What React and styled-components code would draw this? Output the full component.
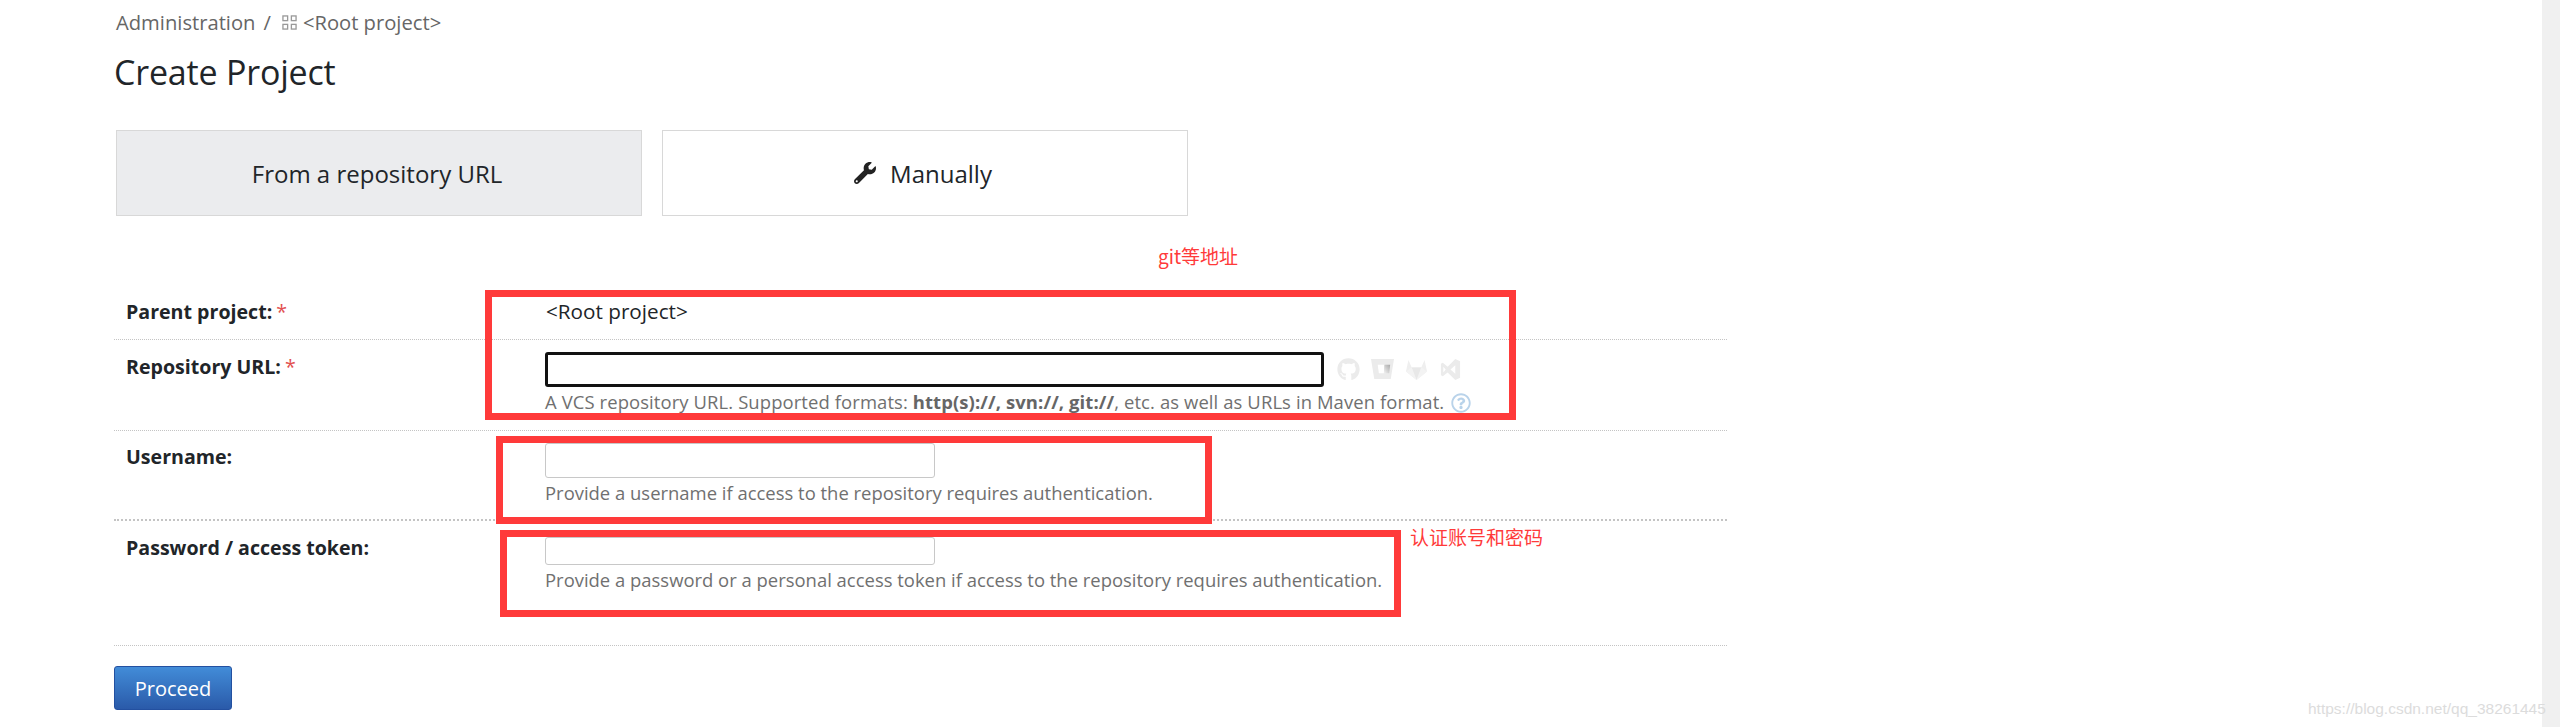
import React from 'react';
import styled, { createGlobalStyle } from 'styled-components';
import { FaGithub, FaWrench, FaRegQuestionCircle } from 'react-icons/fa';

const GlobalStyle = createGlobalStyle`
  html, body {
    margin: 0;
    background: #fff;
  }
  body {
    font-family: "Open Sans", "Noto Sans CJK SC", sans-serif;
    color: #212529;
  }
`;

const Page = styled.div`
  position: relative;
  display: flex;
  width: 2560px;
  height: 727px;
  overflow: hidden;
`;

const Main = styled.div`
  flex: 1;
  padding: 10px 0 0 114px;
  box-sizing: border-box;
`;

const Scrollbar = styled.div`
  width: 18px;
  background: #f0f0f0;
`;

const Crumbs = styled.div`
  display: flex;
  align-items: center;
  height: 24px;
  padding-left: 2px;
  font-size: 20.2px;
  color: #666;
`;

const CrumbSep = styled.span`
  margin: 0 11px 0 8px;
`;

const CrumbIcon = styled.svg`
  width: 15px;
  height: 15px;
  margin-right: 6px;
`;

const Title = styled.h1`
  margin: 18px 0 0 0;
  font-size: 34px;
  line-height: 40px;
  font-weight: 400;
  letter-spacing: -0.2px;
  color: #212529;
`;

const Tabs = styled.div`
  display: flex;
  gap: 20px;
  margin: 38px 0 0 2px;
`;

const Tab = styled.div`
  display: flex;
  align-items: center;
  justify-content: center;
  gap: 14px;
  width: 526px;
  height: 86px;
  padding-right: 4px;
  box-sizing: border-box;
  border: 1px solid #d8d8d8;
  background: ${(p) => (p.$active ? '#ebecee' : '#fff')};
  font-size: 24px;
`;

const Form = styled.div`
  width: 1613px;
  margin-top: 69px;
`;

const Row = styled.div`
  display: grid;
  grid-template-columns: 431px 1fr;
  height: ${(p) => p.$height}px;
  border-bottom: ${(p) => (p.$thick ? '2px' : '1px')} dotted #c4c4c4;
  box-sizing: border-box;
`;

const Label = styled.div`
  padding-left: 12px;
  padding-top: ${(p) => p.$top}px;
  font-size: 19.6px;
  line-height: 26px;
  font-weight: 700;
  color: #212529;
`;

const Star = styled.span`
  margin-left: 4px;
  font-weight: 400;
  color: #e25050;
`;

const Field = styled.div`
  padding-top: ${(p) => p.$top}px;
`;

const Plain = styled.div`
  padding-left: 1px;
  font-size: 20.7px;
  line-height: 26px;
  color: #212529;
`;

const InputRow = styled.div`
  display: flex;
  align-items: center;
  gap: 13px;
`;

const TextInput = styled.div`
  width: ${(p) => p.$width}px;
  height: ${(p) => p.$height}px;
  box-sizing: border-box;
  border: ${(p) => (p.$focus ? '3px solid #111' : '1px solid #c8c8c8')};
  border-radius: 3px;
  background: #fff;
`;

const Hint = styled.div`
  margin-top: ${(p) => p.$gap}px;
  font-size: 18.45px;
  line-height: 24px;
  letter-spacing: ${(p) => p.$spread || 0}px;
  color: #707070;
  white-space: nowrap;
  b { font-weight: 700; color: #666; }
`;

const HelpIcon = styled(FaRegQuestionCircle)`
  margin-left: 7px;
  width: 20px;
  height: 20px;
  color: #b9d3ea;
  vertical-align: -4px;
`;

const Icons = styled.div`
  display: flex;
  align-items: center;
  gap: 11px;
  color: #ebebeb;
  svg { display: block; width: 23px; height: 23px; }
`;

const ProceedBar = styled.div`
  margin-top: 20px;
`;

const Proceed = styled.button`
  width: 118px;
  height: 44px;
  padding: 0;
  border: 1px solid #2350a0;
  border-radius: 3px;
  background: linear-gradient(#428cd8, #2a5aa9);
  color: #fff;
  font-family: inherit;
  font-size: 20px;
`;

const RedBox = styled.div`
  position: absolute;
  left: ${(p) => p.$x}px;
  top: ${(p) => p.$y}px;
  width: ${(p) => p.$w}px;
  height: ${(p) => p.$h}px;
  box-sizing: border-box;
  border: 7px solid #ff3a3a;
`;

const RedNote = styled.div`
  position: absolute;
  left: ${(p) => p.$x}px;
  top: ${(p) => p.$y}px;
  font-family: "Noto Sans CJK SC", sans-serif;
  font-size: 19px;
  line-height: 24px;
  color: #ff3a3a;
`;

const Watermark = styled.div`
  position: absolute;
  left: 2308px;
  top: 698px;
  font-family: "Liberation Sans", sans-serif;
  font-size: 15.5px;
  line-height: 22px;
  color: #dcdcdc;
`;

function App() {
  return (
    <Page>
      <GlobalStyle />
      <Main>
        <Crumbs>
          Administration <CrumbSep>/</CrumbSep>
          <CrumbIcon viewBox="0 0 16 16" fill="none" stroke="#999" strokeWidth="1.4">
            <rect x="1" y="1" width="5" height="5" />
            <rect x="10" y="1" width="5" height="5" />
            <rect x="1" y="10" width="5" height="5" />
            <rect x="10" y="10" width="5" height="5" />
          </CrumbIcon>
          {'<Root project>'}
        </Crumbs>
        <Title>Create Project</Title>
        <Tabs>
          <Tab $active>From a repository URL</Tab>
          <Tab>
            <FaWrench size={22} color="#222" />
            Manually
          </Tab>
        </Tabs>
        <Form>
          <Row $height={55}>
            <Label $top={14}>Parent project:<Star>*</Star></Label>
            <Field $top={13}><Plain>{'<Root project>'}</Plain></Field>
          </Row>
          <Row $height={91}>
            <Label $top={14}>Repository URL:<Star>*</Star></Label>
            <Field $top={12}>
              <InputRow>
                <TextInput $focus $width={779} $height={35} />
                <Icons>
                  <FaGithub />
                  <svg viewBox="0 0 24 24">
                    <defs>
                      <linearGradient id="bbShade" x1="0" y1="1" x2="1" y2="0">
                        <stop offset="0" stopColor="#f4f4f4" />
                        <stop offset="1" stopColor="#a8a8a8" />
                      </linearGradient>
                    </defs>
                    <path fill="#ebebeb" d="M0 1h24l-3.4 21H3.4z" />
                    <path fill="#fff" d="M7 7h7l-.6 9H8.2z" />
                    <path fill="url(#bbShade)" d="M14 7h6l-1 9h-5.6z" />
                  </svg>
                  <svg viewBox="0 0 24 24">
                    <path fill="#efefef" d="M12 23 1 14l2.6-12L7 10h10l3.4-8L23 14z" />
                    <path fill="#e8e8e8" d="M12 23 7 10h10z" />
                    <path fill="#f3f3f3" d="M1 14l6-4 5 13zM23 14l-6-4-5 13z" />
                  </svg>
                  <svg viewBox="0 0 24 24" fill="#ebebeb">
                    <path fillRule="evenodd" d="M17 1l5 2.5v17L17 23l-8-8-5 4-2-1V6l2-1 5 4zM4.5 9v6L7 12zM17 7.5l-5 4.5 5 4.5z" />
                  </svg>
                </Icons>
              </InputRow>
              <Hint $gap={3} $spread={0.1}>
                A VCS repository URL. Supported formats: <b>http(s)://, svn://, git://</b>, etc. as well as URLs in Maven format.
                <HelpIcon />
              </Hint>
            </Field>
          </Row>
          <Row $height={90} $thick>
            <Label $top={13}>Username:</Label>
            <Field $top={12}>
              <TextInput $width={390} $height={35} />
              <Hint $gap={3}>Provide a username if access to the repository requires authentication.</Hint>
            </Field>
          </Row>
          <Row $height={125}>
            <Label $top={14}>Password / access token:</Label>
            <Field $top={16}>
              <TextInput $width={390} $height={28} />
              <Hint $gap={3}>Provide a password or a personal access token if access to the repository requires authentication.</Hint>
            </Field>
          </Row>
        </Form>
        <ProceedBar>
          <Proceed>Proceed</Proceed>
        </ProceedBar>
      </Main>
      <Scrollbar />

      <RedBox $x={485} $y={290} $w={1031} $h={130} />
      <RedBox $x={496} $y={436} $w={716} $h={88} />
      <RedBox $x={500} $y={530} $w={901} $h={87} />
      <RedNote $x={1158} $y={244}>git等地址</RedNote>
      <RedNote $x={1410} $y={525}>认证账号和密码</RedNote>
      <Watermark>https://blog.csdn.net/qq_38261445</Watermark>
    </Page>
  );
}

export default App;
